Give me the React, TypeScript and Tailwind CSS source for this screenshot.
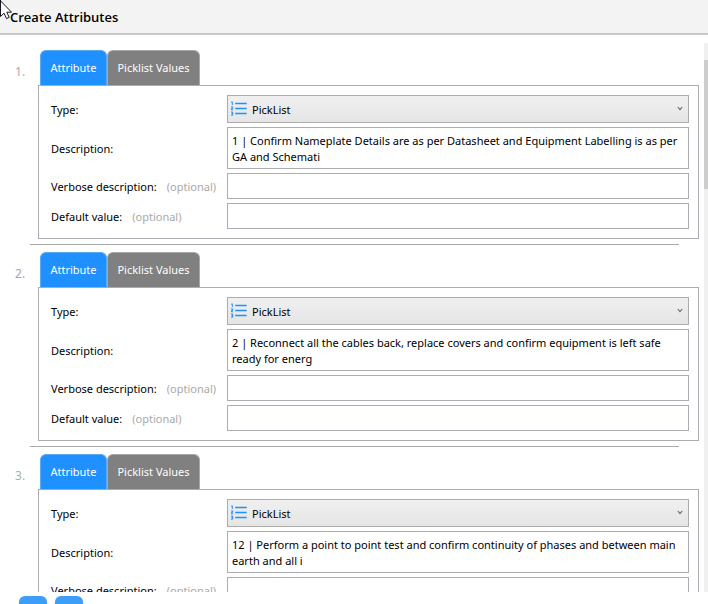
import { useState } from "react"

const attributes = [
  {
    id: 1,
    description:
      "1 | Confirm Nameplate Details are as per Datasheet and Equipment Labelling is as per\nGA and Schemati",
    numberClass: "text-[#b0a8a8]",
  },
  {
    id: 2,
    description:
      "2 | Reconnect all the cables back, replace covers and confirm equipment is left safe\nready for energ",
    numberClass: "text-[#a5a5b8]",
  },
  {
    id: 3,
    description:
      "12 | Perform a point to point test and confirm continuity of phases and between main\nearth and all i",
    numberClass: "text-[#9fb5a5]",
  },
]

function PickListIcon() {
  return (
    <svg
      className="pointer-events-none absolute top-1.5 left-1 h-4 w-4"
      viewBox="0 0 16 16"
      fill="none"
      stroke="#1e90ff"
      aria-hidden="true"
    >
      <path d="M4.2 2.5h11.5M4.2 7.5h11.5M4.2 12.5h11.5" strokeWidth="1.7" />
      <path d="M0.2 1.2L1.3 0.8V4M0 5.9h1.7v1.5H0.5v1.4h1.6M0 11h1.7v3.2H0M0.4 12.6h1.3" strokeWidth="1" />
    </svg>
  )
}

function Chevron() {
  return (
    <svg
      className="pointer-events-none absolute top-[11px] right-1.5 h-1.5 w-1.5"
      viewBox="0 0 6 6"
      fill="none"
      stroke="#666666"
      strokeWidth="1.1"
      aria-hidden="true"
    >
      <path d="M0.8 1L3 3.6L5.2 1" />
    </svg>
  )
}

function Cursor() {
  return (
    <svg className="pointer-events-none absolute top-0 left-0 h-5 w-3" viewBox="0 0 12 20" aria-hidden="true">
      <path
        d="M0.5 0V16.5L4 13.2L6.6 18.6L9.2 17.4L6.8 12.2H11.5L0.5 0.8"
        fill="#ffffff"
        stroke="#15151f"
        strokeWidth="1"
      />
    </svg>
  )
}

function Optional() {
  return <span className="ml-2.5 text-[#a9a9a9]">(optional)</span>
}

function AttributeItem({ item }: { item: (typeof attributes)[number] }) {
  const [tab, setTab] = useState("attribute")
  const fieldId = (name: string) => `${name}-${item.id}`

  return (
    <li className="flex">
      <span className={`w-[38px] shrink-0 pt-3.5 pl-[15px] text-[12px] ${item.numberClass}`}>{item.id}.</span>
      <div className="min-w-0 flex-1">
        {/* Tabs */}
        <div className="flex h-[35px] pl-0.5" role="tablist">
          <button
            role="tab"
            aria-selected={tab === "attribute"}
            onClick={() => setTab("attribute")}
            className="w-[67px] rounded-t-md border border-b-0 border-[#5aa9f5] bg-[#1e90ff] text-white"
          >
            Attribute
          </button>
          <button
            role="tab"
            aria-selected={tab === "values"}
            onClick={() => setTab("values")}
            className="w-[93px] rounded-t-md border border-b-0 border-[#a8a8a8] bg-[#808080] whitespace-nowrap text-white"
          >
            Picklist Values
          </button>
        </div>

        {/* Fields */}
        <div className="mr-1.5 grid grid-cols-[176px_1fr] items-center gap-y-1 border border-[#abadb3] py-[9px] pr-[9px] pl-3">
          <label htmlFor={fieldId("type")} className="pt-0.5">
            Type:
          </label>
          <div className="relative h-7">
            <select
              id={fieldId("type")}
              className="h-7 w-full appearance-none border border-[#acacac] bg-linear-to-b from-[#f0f0f0] to-[#e5e5e5] pt-0.5 pl-6 outline-none"
            >
              <option>PickList</option>
            </select>
            <PickListIcon />
            <Chevron />
          </div>

          <label htmlFor={fieldId("description")} className="pt-0.5">
            Description:
          </label>
          <textarea
            id={fieldId("description")}
            defaultValue={item.description}
            className="block h-[42px] w-full resize-none overflow-hidden border border-[#abadb3] bg-white pt-[5px] pl-1 leading-4 whitespace-pre outline-none"
          />

          <label htmlFor={fieldId("verbose")} className="pt-0.5 whitespace-nowrap">
            Verbose description:
            <Optional />
          </label>
          <input
            id={fieldId("verbose")}
            type="text"
            className="h-[26px] w-full border border-[#abadb3] bg-white px-1 outline-none"
          />

          <label htmlFor={fieldId("default")} className="pt-0.5 whitespace-nowrap">
            Default value:
            <Optional />
          </label>
          <input
            id={fieldId("default")}
            type="text"
            className="h-[26px] w-full border border-[#abadb3] bg-white px-1 outline-none"
          />
        </div>
        <hr className="mt-[5px] mr-[26px] mb-[7px] -ml-2 border-[#a9a9a9]" />
      </div>
    </li>
  )
}

export default function App() {
  return (
    <div className="relative flex h-screen flex-col overflow-hidden bg-white font-['Noto_Sans',sans-serif] text-[11px] leading-4 text-black">
      <header className="h-[35px] shrink-0 border-b-2 border-[#c8c8c8] bg-[#f3f3f3] pt-2 pl-2.5">
        <h1 className="font-['Open_Sans',sans-serif] text-[13px] leading-[18px] font-semibold">Create Attributes</h1>
      </header>

      <main className="flex min-h-0 flex-1">
        <ol className="min-w-0 flex-1 overflow-hidden pt-[15px]">
          {attributes.map((item) => (
            <AttributeItem key={item.id} item={item} />
          ))}
        </ol>
        {/* Scrollbar */}
        <div className="-ml-px mt-2 w-1 shrink-0 bg-[#f0f0f0] pt-[17px]">
          <div className="h-[129px] bg-[#cdcdcd]" />
        </div>
      </main>

      <footer className="flex h-3 shrink-0 gap-2 overflow-hidden bg-white pt-1 pl-[19px]">
        <button aria-label="Add attribute" className="h-7 w-7 shrink-0 rounded-md bg-[#3d9dfb] shadow" />
        <button aria-label="Remove attribute" className="h-7 w-7 shrink-0 rounded-md bg-[#3d9dfb] shadow" />
      </footer>

      <Cursor />
    </div>
  )
}
